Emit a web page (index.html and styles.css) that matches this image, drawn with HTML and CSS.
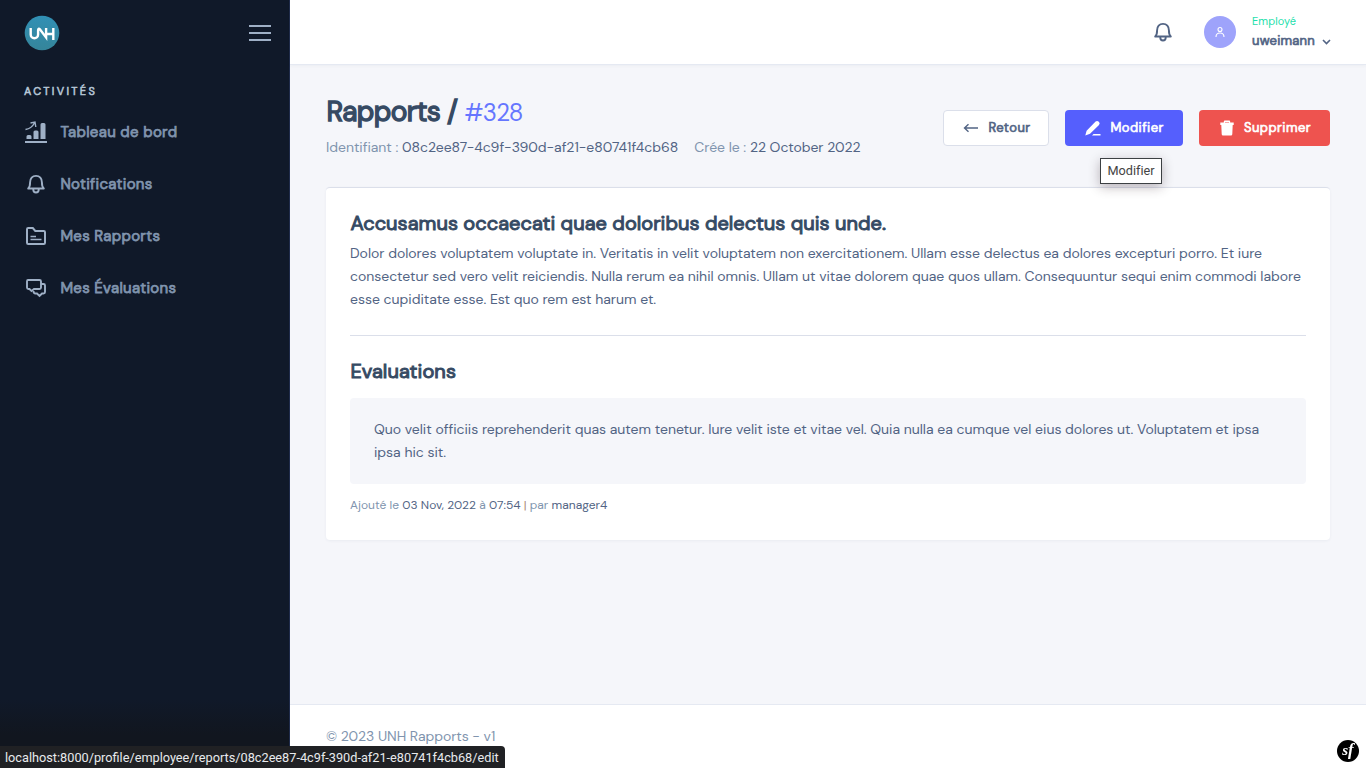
FILE: index.html
```html
<!DOCTYPE html>
<html lang="fr">
<head>
<meta charset="utf-8">
<title>Rapports #328</title>
<link rel="stylesheet" href="styles.css">
</head>
<body>
<div class="app">
  <aside class="sidebar">
    <div class="brand">
      <svg class="logo" viewBox="0 0 36 36"><defs><linearGradient id="lg" x1="0" y1="0" x2="0" y2="1"><stop offset="0" stop-color="#3190b5"/><stop offset="1" stop-color="#35859a"/></linearGradient></defs><circle cx="18" cy="18" r="17.300" fill="url(#lg)"/><path d="M6.700 13v6.500a3.700 3.700 0 0 0 7.400 0V15.500q0-2.800 2-1l6 8V13M22.100 19h7.400M29.300 13v12M22.100 19v3.500" fill="none" stroke="#fff" stroke-width="2.400"/></svg>
      <svg class="burger" viewBox="0 0 22 16"><path d="M0 1h22M0 8h22M0 15h22" stroke="#9fb0c6" stroke-width="2"/></svg>
    </div>
    <h6 class="nav-head">ACTIVITÉS</h6>
    <nav class="nav">
      <a class="nav-item"><svg class="nav-icon" viewBox="0 0 24 24"><path d="M1 22h22" stroke="#9fb0c6" stroke-width="2"/><path d="M2.500 19v-2.500a1.500 1.500 0 0 1 1.500-1.500h2a1.500 1.500 0 0 1 1.500 1.500V19zM9.500 19v-7a1.500 1.500 0 0 1 1.500-1.500h2a1.500 1.500 0 0 1 1.500 1.500v7zM16.500 19V4.500A1.500 1.500 0 0 1 18 3h2a1.500 1.500 0 0 1 1.500 1.500V19z" fill="#9fb0c6"/><path d="M1.500 9.500Q7.500 8.500 10.500 3M6.500 3l4.500-1 .8 5" fill="none" stroke="#9fb0c6" stroke-width="1.400"/></svg><span>Tableau de bord</span></a>
      <a class="nav-item"><svg class="nav-icon" viewBox="0 0 24 24"><path d="M4.200 16.500h15.600c-1.700-1.500-1.900-3-1.900-6.300 0-3.900-2.200-6.300-5.900-6.300s-5.900 2.400-5.900 6.300c0 3.300-.2 4.800-1.900 6.300zM9.300 17.300v.5a2.700 2.700 0 0 0 5.400 0v-.5" fill="none" stroke="#9fb0c6" stroke-width="1.900" stroke-linejoin="round"/></svg><span>Notifications</span></a>
      <a class="nav-item"><svg class="nav-icon" viewBox="0 0 24 24"><path d="M3 5.200C3 4.500 3.500 4 4.200 4h4.600l2.500 3h8.500c.7 0 1.200.5 1.200 1.200v10.600c0 .7-.5 1.200-1.200 1.200H4.200C3.500 20 3 19.500 3 18.800z" fill="none" stroke="#9fb0c6" stroke-width="2"/><path d="M6.500 12.500h5.500M6.500 15.500h11" stroke="#9fb0c6" stroke-width="1.500"/></svg><span>Mes Rapports</span></a>
      <a class="nav-item"><svg class="nav-icon" viewBox="0 0 24 24"><path d="M4 4h11.500c1 0 1.500.5 1.500 1.500v6c0 1-.5 1.500-1.500 1.500H10l-2.500 2L5.500 13H4.500C3.500 13 3 12.500 3 11.500V5.500C3 4.500 3.500 4 4 4z" fill="none" stroke="#9fb0c6" stroke-width="1.900"/><path d="M17 8h2.500c1 0 1.500.5 1.500 1.500V16c0 1-.5 1.500-1.500 1.500H18L15.500 20 13 17.500h-1.500c-1.500 0-2-.5-2-2.500" fill="none" stroke="#9fb0c6" stroke-width="1.900"/></svg><span>Mes Évaluations</span></a>
    </nav>
  </aside>
  <div class="wrap">
    <header class="topbar">
      <svg class="bell" viewBox="0 0 24 24"><path d="M4.200 16.500h15.600c-1.700-1.500-1.900-3-1.900-6.300 0-3.900-2.200-6.300-5.900-6.300s-5.900 2.400-5.900 6.300c0 3.300-.2 4.800-1.900 6.300zM9.300 17.300v.5a2.700 2.700 0 0 0 5.400 0v-.5" fill="none" stroke="#526484" stroke-width="1.900" stroke-linejoin="round"/></svg>
      <div class="avatar"><svg viewBox="0 0 12 12"><circle cx="6" cy="3.500" r="2" /><path d="M2 11c0-2.500 1.600-4 4-4s4 1.500 4 4"/></svg></div>
      <div class="user"><div class="role">Employé</div><div class="name"><span>uweimann</span><svg viewBox="0 0 9 6"><path d="M1 1l3.500 3.500L8 1" fill="none" stroke="#526484" stroke-width="1.600"/></svg></div></div>
    </header>
    <main class="content">
      <div class="page-head">
        <div>
          <h1 class="title">Rapports / <span class="num">#328</span></h1>
          <div class="meta"><span>Identifiant :</span> <b>08c2ee87-4c9f-390d-af21-e80741f4cb68</b><span class="created">Crée le :</span> <b>22 October 2022</b></div>
        </div>
        <div class="actions">
          <a class="btn back"><svg viewBox="0 0 16 16"><path d="M15 8H1.500M5.500 4.200L1.500 8l4 3.800" fill="none" stroke="#526484" stroke-width="1.400"/></svg><span>Retour</span></a>
          <a class="btn edit"><svg viewBox="0 0 16 16"><path d="M1.600 10.800L10.600 1.600q1.500-1.400 3.200.2t.2 3.100L5 13.800.3 15.600zM8.500 14h7v1.500H7z" fill="#fff"/></svg><span>Modifier</span></a>
          <a class="btn del"><svg viewBox="0 0 16 16"><path d="M2.300 5h11.400l-.4 9c-.1 1-.7 1.500-1.600 1.500H4.300c-.9 0-1.500-.5-1.600-1.500zM1.300 2.600h3.500V2c0-.9.500-1.400 1.400-1.400h3.600c.9 0 1.400.5 1.400 1.400v.6h3.500V5H1.300zm4.700 0h4V1.900H6z" fill="#fff" fill-rule="evenodd"/></svg><span>Supprimer</span></a>
          <div class="tip">Modifier</div>
        </div>
      </div>
      <section class="card">
        <h2 class="h">Accusamus occaecati quae doloribus delectus quis unde.</h2>
        <p class="text">Dolor dolores voluptatem voluptate in. Veritatis in velit voluptatem non exercitationem. Ullam esse delectus ea dolores excepturi porro. Et iure<br>consectetur sed vero velit reiciendis. Nulla rerum ea nihil omnis. Ullam ut vitae dolorem quae quos ullam. Consequuntur sequi enim commodi labore<br>esse cupiditate esse. Est quo rem est harum et.</p>
        <h2 class="h second">Evaluations</h2>
        <div class="quote text">Quo velit officiis reprehenderit quas autem tenetur. Iure velit iste et vitae vel. Quia nulla ea cumque vel eius dolores ut. Voluptatem et ipsa<br>ipsa hic sit.</div>
        <div class="byline">Ajouté le <b>03 Nov, 2022</b> à <b>07:54</b> <span class="pipe">|</span> par <b>manager4</b></div>
      </section>
    </main>
    <footer class="footer">© 2023 UNH Rapports - v1</footer>
  </div>
</div>
<div class="status">localhost:8000/profile/employee/reports/08c2ee87-4c9f-390d-af21-e80741f4cb68/edit</div>
<div class="sf"><span>s</span><span class="f">f</span></div>
</body>
</html>
```
FILE: styles.css
```css
*{box-sizing:border-box}
body{margin:0;height:768px;overflow:hidden;background:#f5f6fa;color:#526484;font:14px/23px "DM Sans",Inter,sans-serif;letter-spacing:-.018px}
h1,h2,h6,p{margin:0}
b{font-weight:400;color:#526484}
svg{flex:none;display:block}
.app{display:flex;height:768px}
.sidebar{width:290px;flex:none;background:linear-gradient(#101929 0,#101929 700px,#11161f 735px);border-right:1px solid #1f2b4a}
.brand{height:65px;display:flex;align-items:center;justify-content:space-between;padding:1px 18px 0 24px}
.logo{width:36px;height:36px}
.burger{width:22px;height:16px}
.nav-head,.nav-item,.name,.title,.btn,.h{font-weight:400;-webkit-text-stroke:.05em currentColor}
.nav-head{padding:15px 24px 0;font-size:11px;line-height:22px;letter-spacing:2.350px;color:#b6c6d6}
.nav{display:flex;flex-direction:column;padding:4px 24px 0}
.nav-item{height:52px;display:flex;align-items:center;gap:12.400px;font-size:15px;letter-spacing:.31px;color:#8094ae}
.nav-icon{width:24px;height:24px}
.wrap{flex:1;display:flex;flex-direction:column;min-width:0}
.topbar{height:65px;background:#fff;border-bottom:1px solid #e5e9f2;box-shadow:0 1px 3px rgba(54,74,99,.05);display:flex;align-items:center;padding:0 35px 0 0;justify-content:flex-end;flex:none}
.bell{width:24px;height:24px;margin-right:29px}
.avatar{width:32px;height:32px;border-radius:50%;background:#9ea3fb;display:flex;align-items:center;justify-content:center;margin-right:16px}
.avatar svg{width:12px;height:12px;fill:none;stroke:#fff;stroke-width:1.1}
.user{width:79px}
.role{font-size:11px;line-height:14px;letter-spacing:.1px;color:#1ee0ac;margin-top:-2px}
.name{font-size:13px;line-height:16px;letter-spacing:.22px;margin-top:5px;display:flex;align-items:center;gap:7px}
.name svg{width:9px;height:6px;margin-top:3px}
.content{padding:29px 36px 0;flex:1}
.page-head{display:flex;justify-content:space-between;height:93px}
.title{font-size:28px;line-height:36px;letter-spacing:-.600px;color:#364a63;white-space:nowrap;padding-left:.500px}
.num{font-size:24px;letter-spacing:-.800px;-webkit-text-stroke:0;color:#6576ff}
.meta{color:#8094ae;line-height:24px;letter-spacing:-.035px;margin-top:4px;white-space:nowrap}
.created{margin-left:16px}
.actions{display:flex;gap:16px;padding-top:16px;position:relative}
.btn{height:36px;border-radius:4px;display:flex;align-items:center;padding:0 19px;gap:9.400px;font-size:13px;letter-spacing:.47px;color:#fff}
.btn span{margin-top:-2px}
.btn svg{width:16px;height:16px}
.back{background:#fff;border:1px solid #dbdfea;color:#526484;width:106px}
.edit{background:#555ffd;width:118px;padding-left:20px}
.del{background:#ee534f;width:131px;padding-left:20px}
.del svg{margin-left:-.500px}
.tip{position:absolute;left:157px;top:64px;width:62px;height:26px;border:1px solid #3c4043;background:#fff;color:#444;font:12.700px/24px Roboto,sans-serif;text-align:center;box-shadow:0 3px 12px rgba(40,20,30,.3);z-index:2}
.card{height:353px;background:#fff;border-top:1px solid #dbdfea;border-radius:4px;padding:22px 24px;box-shadow:0 1px 3px rgba(54,74,99,.06)}
.h{font-size:20px;line-height:26px;letter-spacing:.030px;color:#364a63;white-space:nowrap;padding-left:.400px}
.text{white-space:nowrap;line-height:23px}
p.text{margin-top:6px;padding-bottom:24px;border-bottom:1px solid #dbdfea}
.second{margin-top:22px;letter-spacing:.080px}
.quote{background:#f5f6fa;border-radius:4px;height:86px;padding:20px 24px;margin-top:14px}
.byline{font-size:12px;letter-spacing:.02px;color:#8094ae;line-height:20px;margin-top:11px}
.pipe{color:#a87}
.footer{height:64px;background:#fff;border-top:1px solid #e5e9f2;padding:20px 36px;letter-spacing:-.05px;color:#8094ae;flex:none}
.status{position:fixed;left:0;top:746px;width:505px;height:22px;background:#202124;border-radius:0 4px 0 0;color:#e8eaed;font:12.730px/23px Roboto,sans-serif;letter-spacing:0;padding-left:5px;white-space:nowrap}
.sf{position:fixed;left:1337px;top:740px;width:22px;height:22px;border-radius:50%;background:#000;color:#fff;font:italic bold 15px/20px "Liberation Serif",serif;text-align:center}
.f{font-size:17px}
```
